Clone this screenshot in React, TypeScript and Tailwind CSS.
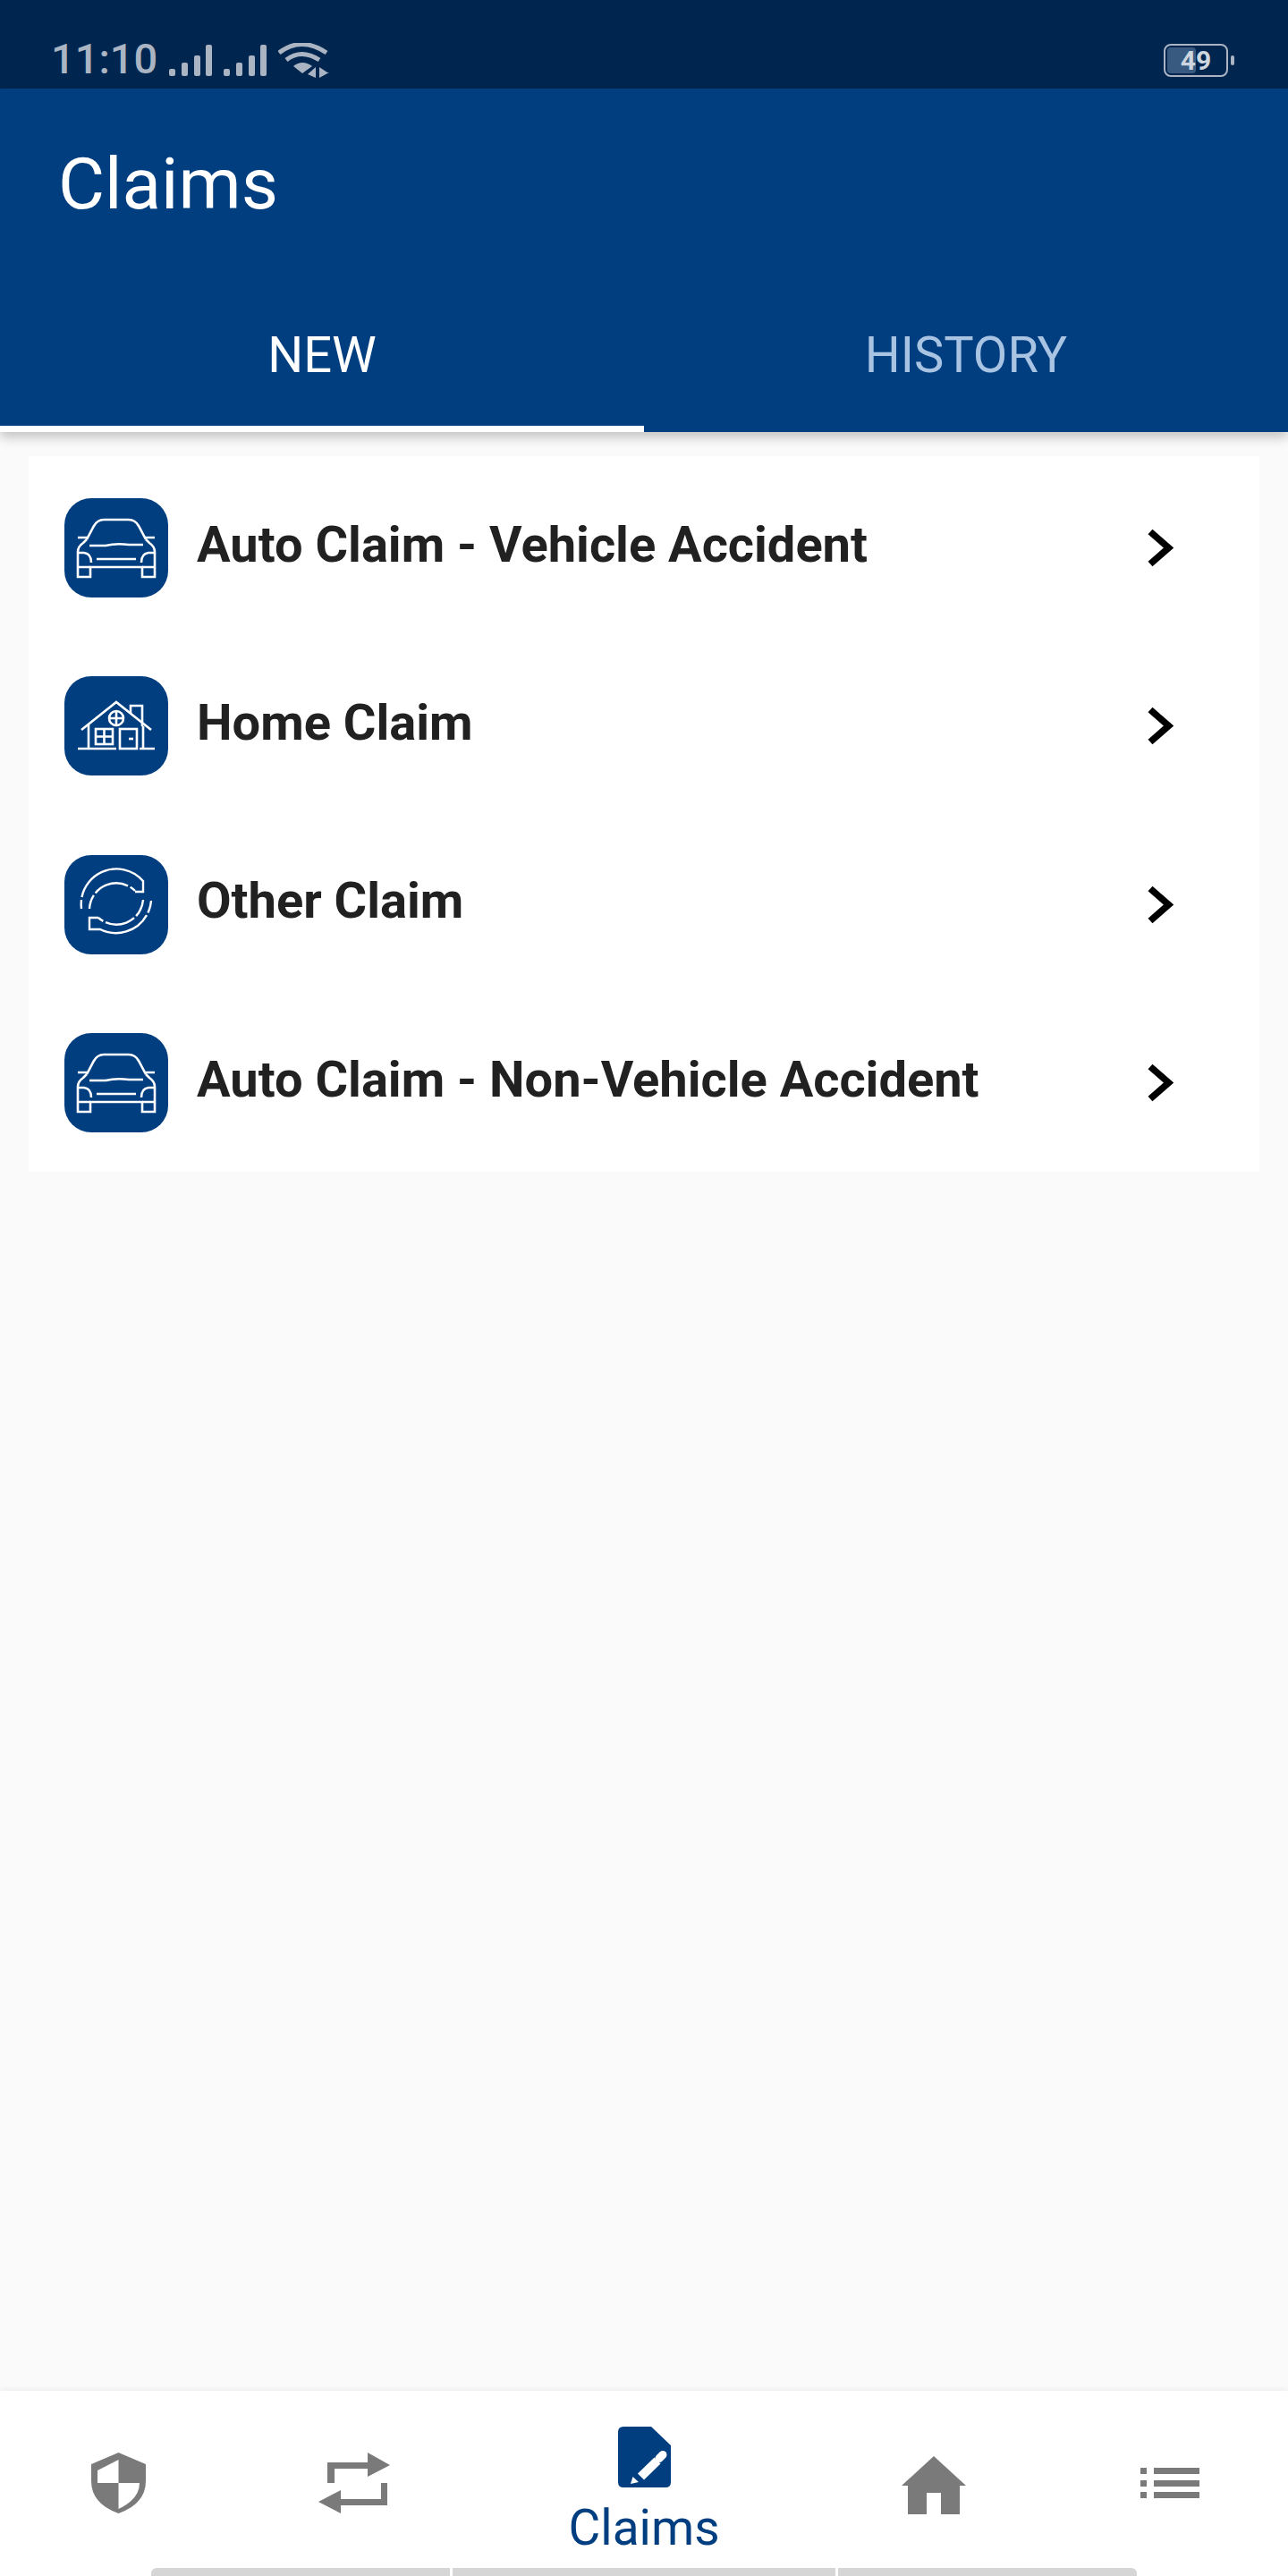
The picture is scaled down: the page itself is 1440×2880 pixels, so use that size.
import React from 'react';

function CarIcon() {
  return (
    <svg viewBox="0 0 116 111" className="size-full" fill="none" stroke="white" strokeWidth="2.6">
      <path d="M25 46 L33 31 Q37 24 44 24 H72 Q79 24 83 31 L91 46" />
      <path d="M15 44 H26 M90 44 H101" />
      <path d="M25 46 L21 50 Q15 54 15 60 V88 H29 V77 H87 V88 H101 V60 Q101 54 95 50 L91 46" />
      <path d="M28 53 H46 Q58 50 72 52 H88" />
      <path d="M15 61 H22 Q30 62 30 72 M101 61 H94 Q86 62 86 72" />
      <path d="M36 68 H80" />
      <path d="M15 77 H29 M87 77 H101" />
    </svg>
  );
}

function HouseIcon() {
  return (
    <svg viewBox="0 0 116 111" className="size-full" fill="none" stroke="white" strokeWidth="2.6">
      <path d="M19 60 L58 29 L97 60" />
      <path d="M27 54 V81 M88 56 V81" />
      <path d="M15 81 H58 M84 81 H101" />
      <path d="M74 42 V33 H87 V56" />
      <circle cx="58" cy="47" r="8" />
      <path d="M50 47 H66 M58 39 V55" />
      <rect x="35" y="59" width="19" height="17" />
      <path d="M35 67.5 H54 M44.5 59 V76" />
      <rect x="62" y="59" width="19" height="22" />
      <path d="M72 70 H77" />
    </svg>
  );
}

function CycleIcon() {
  return (
    <svg viewBox="0 0 116 111" className="size-full" fill="none" stroke="white" strokeWidth="2.4">
      {/* top arrow */}
      <path d="M19 60 A39.5 39.5 0 0 1 88 29 V41 H79" strokeDasharray="10 3 200" />
      <path d="M28 60 A30 30 0 0 1 79 40" strokeDasharray="16 3 40 3 60" />
      {/* bottom arrow */}
      <path d="M97 51 A39.5 39.5 0 0 1 40 83 H28 V70 H38" strokeDasharray="14 3 200" />
      <path d="M88 50 A30 30 0 0 1 38 70" strokeDasharray="20 3 34 3 60" />
    </svg>
  );
}

function Chevron() {
  return (
    <svg viewBox="0 0 29 43" className="h-[43px] w-[29px] shrink-0" fill="none" stroke="black" strokeWidth="7.5">
      <path d="M3 3.5 L23.5 21.5 L3 39.5" />
    </svg>
  );
}

function SignalBars() {
  return (
    <svg viewBox="0 0 48 35" className="mb-[2px] h-[35px] w-[48px]" fill="currentColor">
      <rect x="0" y="27" width="7" height="8" rx="2" />
      <rect x="14" y="20" width="7" height="15" rx="2" />
      <rect x="28" y="12" width="7" height="23" rx="2" />
      <rect x="41" y="0" width="7" height="35" rx="2" />
    </svg>
  );
}

function ClaimRow({ icon, label }: { icon: React.ReactNode; label: string }) {
  return (
    <div className="flex h-[199.33px] items-center pl-10 pr-[96px]">
      <div className="h-[111px] w-[116px] shrink-0 rounded-[30px] bg-[#003e80]">{icon}</div>
      <span className="ml-8 flex-1 pb-[8px] text-[56px] font-bold text-[#212121]">{label}</span>
      <Chevron />
    </div>
  );
}

function NavItem({ className, children }: { className: string; children: React.ReactNode }) {
  return <div className={`flex flex-col items-center ${className}`}>{children}</div>;
}

export default function App() {
  return (
    <div className="flex h-[2880px] w-[1440px] flex-col overflow-hidden bg-[#fafafa] font-['Roboto',sans-serif]">
      {/* status bar */}
      <div className="flex h-[99px] items-end justify-between bg-[#00264f] pb-3 pl-[57px] pr-[60px] text-[#aab4c2]">
        <div className="flex items-end gap-[13px]">
          <span className="text-[47px] leading-[42px] font-medium">11:10</span>
          <SignalBars />
          <SignalBars />
          <svg viewBox="0 0 58 39" className="h-[39px] w-[58px]">
            <path d="M1 11 Q26 -8 54 11 M9 19 Q26 6 46 19" fill="none" stroke="currentColor" strokeWidth="5" />
            <path d="M17 26 Q27 18 38 26 L27 34 Z" fill="currentColor" />
            <path d="M42 39 V27 L33 35 Z M46 27 L55 33 H46 Z M46 33 H57 L46 39 Z" fill="currentColor" />
          </svg>
        </div>
        <div className="flex items-center pb-px">
          <div className="relative flex h-[37px] w-[72px] items-center justify-center overflow-hidden rounded-[8px] border-2 border-[#aab4c2]">
            <div className="absolute inset-y-[2px] left-[2px] w-[32px] rounded-[4px] bg-[#385a80]" />
            <span className="relative text-[30px] leading-none font-bold text-[#cdd5df]">49</span>
          </div>
          <div className="ml-[3px] h-[11px] w-[4px] rounded-sm bg-[#aab4c2]" />
        </div>
      </div>

      {/* app bar and tabs */}
      <div className="relative z-10 bg-[#003e80] shadow-[0_6px_12px_rgba(0,0,0,0.22)]">
        <div className="flex h-[233px] items-start pl-[65px] pt-[64px] text-[80px] leading-[86px] text-white">Claims</div>
        <div className="flex h-[151px]">
          <div className="flex flex-1 items-start justify-center border-b-[7px] border-white pt-[33px] text-[56px] leading-[64px] text-white">NEW</div>
          <div className="flex flex-1 items-start justify-center pt-[33px] text-[56px] leading-[64px] text-[#a9c3e3]">HISTORY</div>
        </div>
      </div>

      {/* claim types */}
      <div className="flex-1 px-8 pt-[27px]">
        <div className="bg-white pt-[3px]">
          <ClaimRow icon={<CarIcon />} label="Auto Claim - Vehicle Accident" />
          <ClaimRow icon={<HouseIcon />} label="Home Claim" />
          <ClaimRow icon={<CycleIcon />} label="Other Claim" />
          <ClaimRow icon={<CarIcon />} label="Auto Claim - Non-Vehicle Accident" />
        </div>
      </div>

      {/* bottom navigation */}
      <div className="flex h-[207px] flex-col bg-white shadow-[0_-2px_6px_rgba(0,0,0,0.05)]">
        <div className="flex h-[198px] items-start">
          <NavItem className="w-[264px] pt-[69px]">
            <svg viewBox="0 0 61 68" className="h-[68px] w-[61px]" fill="#7a7a7a">
              <path
                fillRule="evenodd"
                d="M30.5 0 L61 13 V32 Q61 57 30.5 68 Q0 57 0 32 V13 Z M30.5 8 L7 20 V34 H30.5 V63 Q54 52 54 34 H30.5 Z"
              />
            </svg>
          </NavItem>
          <NavItem className="w-[264px] pt-[69px]">
            <svg viewBox="0 0 80 68" className="h-[68px] w-[80px]" fill="#7a7a7a">
              <path d="M10 11 H55 V0 L80 14 L55 27 V18 H18 V34 H10 Z" />
              <path d="M70 34 H77 V59 H25 V68 L0 55 L25 42 V52 H70 Z" />
            </svg>
          </NavItem>
          <NavItem className="w-[384px] pt-[40px]">
            <svg viewBox="0 0 59 68" className="h-[68px] w-[59px]">
              <path d="M6 0 H37 L59 21 V62 Q59 68 53 68 H6 Q0 68 0 62 V6 Q0 0 6 0 Z" fill="#003e80" />
              <path d="M25.5 56 L44 38" stroke="white" strokeWidth="10" />
              <path d="M46 35.5 L50 31.5" stroke="white" strokeWidth="9" strokeLinecap="round" />
              <path d="M14 64 L16.5 56 L23 62 Z" fill="white" />
            </svg>
            <span className="mt-[13px] text-[55px] leading-[64px] text-[#003e80]">Claims</span>
          </NavItem>
          <NavItem className="w-[264px] pt-[73px]">
            <svg viewBox="0 0 72 65" className="h-[65px] w-[72px]" fill="#7a7a7a">
              <path d="M36 0 L72 33 H65 V65 H44 V41 H28 V65 H7 V33 H0 Z" />
            </svg>
          </NavItem>
          <NavItem className="w-[264px] pt-[86px]">
            <svg viewBox="0 0 66 34" className="h-[34px] w-[66px]" fill="#7a7a7a">
              <rect x="0" y="0" width="7" height="7" />
              <rect x="15" y="0" width="51" height="7" />
              <rect x="0" y="14" width="7" height="7" />
              <rect x="15" y="14" width="51" height="7" />
              <rect x="0" y="27" width="7" height="7" />
              <rect x="15" y="27" width="51" height="7" />
            </svg>
          </NavItem>
        </div>
        <div className="flex h-[9px] gap-[3px] pl-[169px]">
          <div className="w-[334px] rounded-tl-[6px] bg-[#d6d6d6]" />
          <div className="w-[428px] bg-[#d6d6d6]" />
          <div className="w-[334px] rounded-tr-[6px] bg-[#d6d6d6]" />
        </div>
      </div>
    </div>
  );
}
